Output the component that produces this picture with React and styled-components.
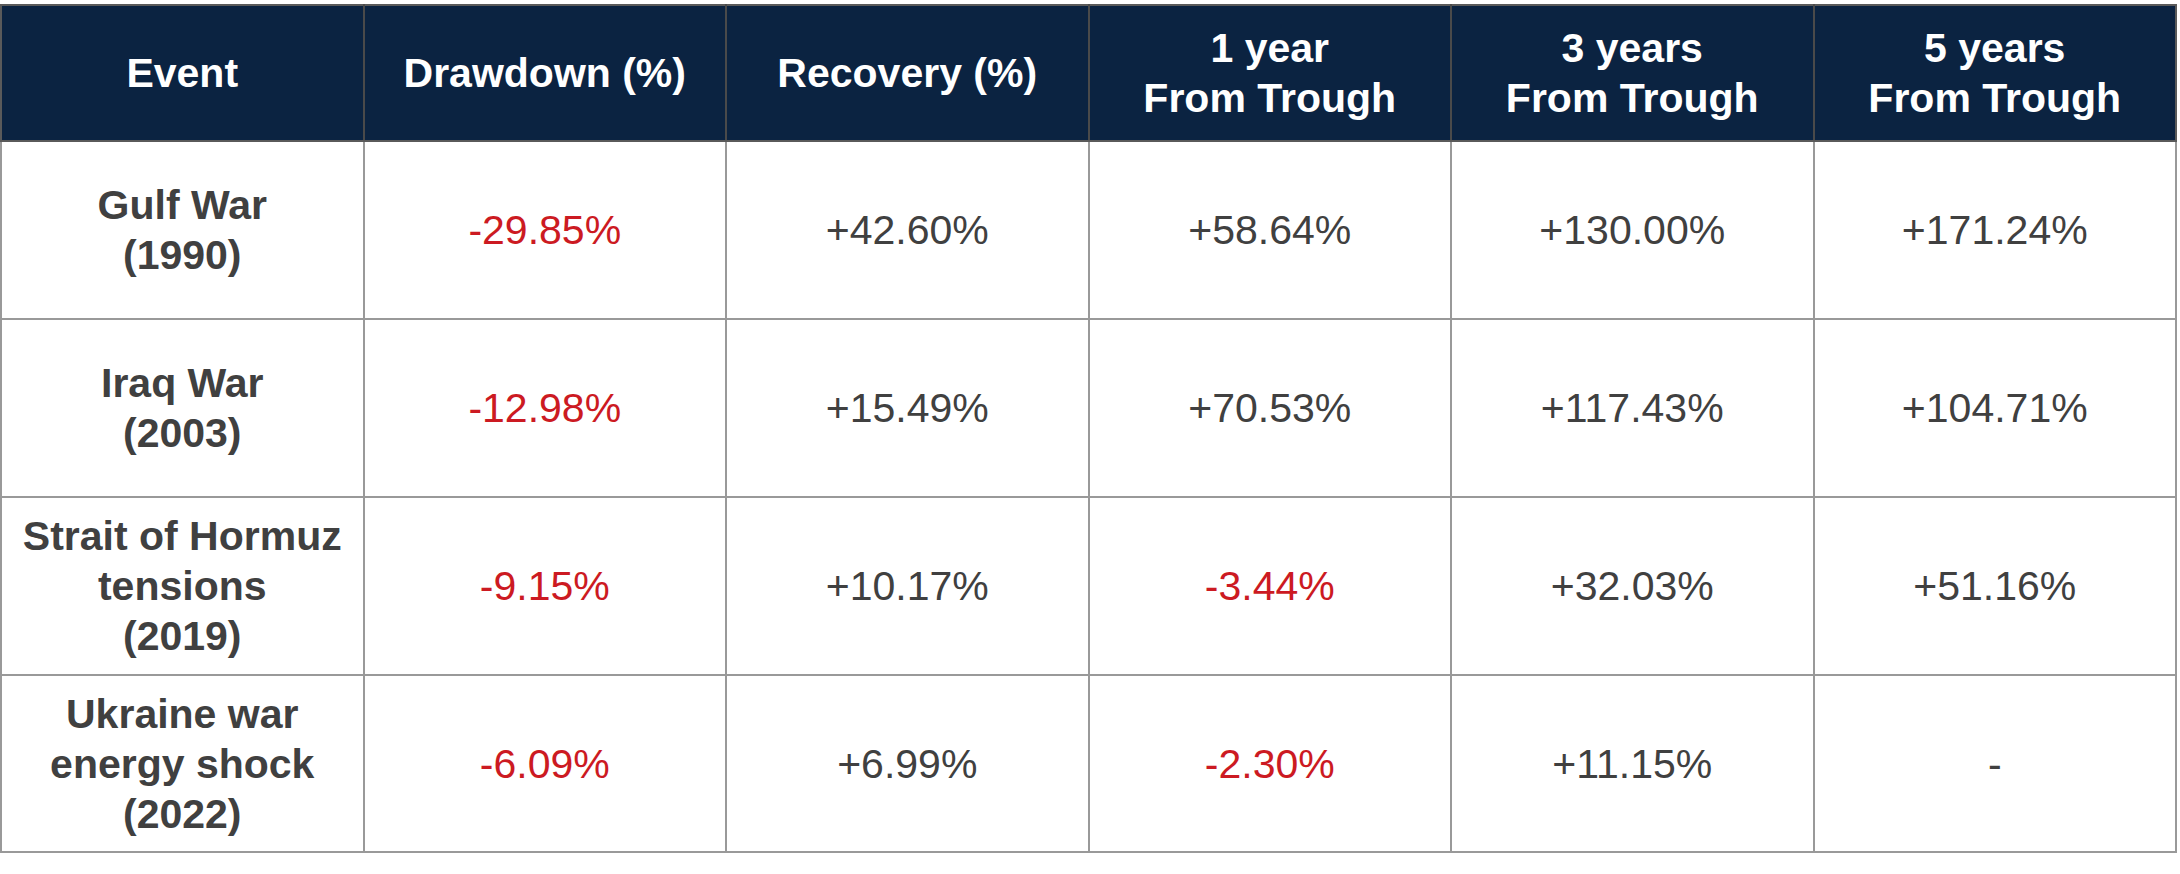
import React from 'react';
import styled, { createGlobalStyle } from 'styled-components';

const GlobalStyle = createGlobalStyle`
  body {
    margin: 0;
    background: #ffffff;
    font-family: "Liberation Sans", Arial, sans-serif;
  }
`;

const Page = styled.div`
  padding-top: 4px;
  width: 2177px;
`;

const Table = styled.table`
  width: 2177px;
  border-collapse: collapse;
  table-layout: fixed;
  border: 2px solid #5a5a5a;
`;

const HeadCell = styled.th`
  height: 134px;
  padding: 0 8px;
  background-color: #0b2341;
  color: #ffffff;
  font-size: 41px;
  font-weight: bold;
  line-height: 50px;
  text-align: center;
  vertical-align: middle;
  border-left: 2px solid #4a4a4a;
  border-bottom: 2px solid #5a5a5a;

  &:first-child {
    border-left: none;
  }
`;

const Row = styled.tr`
  height: ${(p) => p.$h}px;
`;

const Cell = styled.td`
  padding: 0 6px;
  text-align: center;
  vertical-align: middle;
  font-size: 41px;
  line-height: 50px;
  font-weight: ${(p) => (p.$bold ? 'bold' : 'normal')};
  color: ${(p) => (p.$neg ? '#cc1a22' : '#404040')};
  border: 2px solid #999999;
`;

const headers = [
  ['Event'],
  ['Drawdown (%)'],
  ['Recovery (%)'],
  ['1 year', 'From Trough'],
  ['3 years', 'From Trough'],
  ['5 years', 'From Trough'],
];

const rows = [
  { event: ['Gulf War', '(1990)'], values: ['-29.85%', '+42.60%', '+58.64%', '+130.00%', '+171.24%'] },
  { event: ['Iraq War', '(2003)'], values: ['-12.98%', '+15.49%', '+70.53%', '+117.43%', '+104.71%'] },
  { event: ['Strait of Hormuz', 'tensions', '(2019)'], values: ['-9.15%', '+10.17%', '-3.44%', '+32.03%', '+51.16%'] },
  { event: ['Ukraine war', 'energy shock', '(2022)'], values: ['-6.09%', '+6.99%', '-2.30%', '+11.15%', '-'] },
];

const lines = (parts) =>
  parts.map((t, i) => (
    <React.Fragment key={i}>
      {i > 0 && <br />}
      {t}
    </React.Fragment>
  ));

const App = () => {
  return (
    <Page>
      <GlobalStyle />
      <Table>
        <thead>
          <tr>
            {headers.map((h, i) => (
              <HeadCell key={i}>{lines(h)}</HeadCell>
            ))}
          </tr>
        </thead>
        <tbody>
          {rows.map((r, i) => (
            <Row key={i} $h={i === 3 ? 177 : 178}>
              <Cell $bold>{lines(r.event)}</Cell>
              {r.values.map((v, j) => (
                <Cell key={j} $neg={v.startsWith('-') && v.length > 1}>
                  {v}
                </Cell>
              ))}
            </Row>
          ))}
        </tbody>
      </Table>
    </Page>
  );
};

export default App;
